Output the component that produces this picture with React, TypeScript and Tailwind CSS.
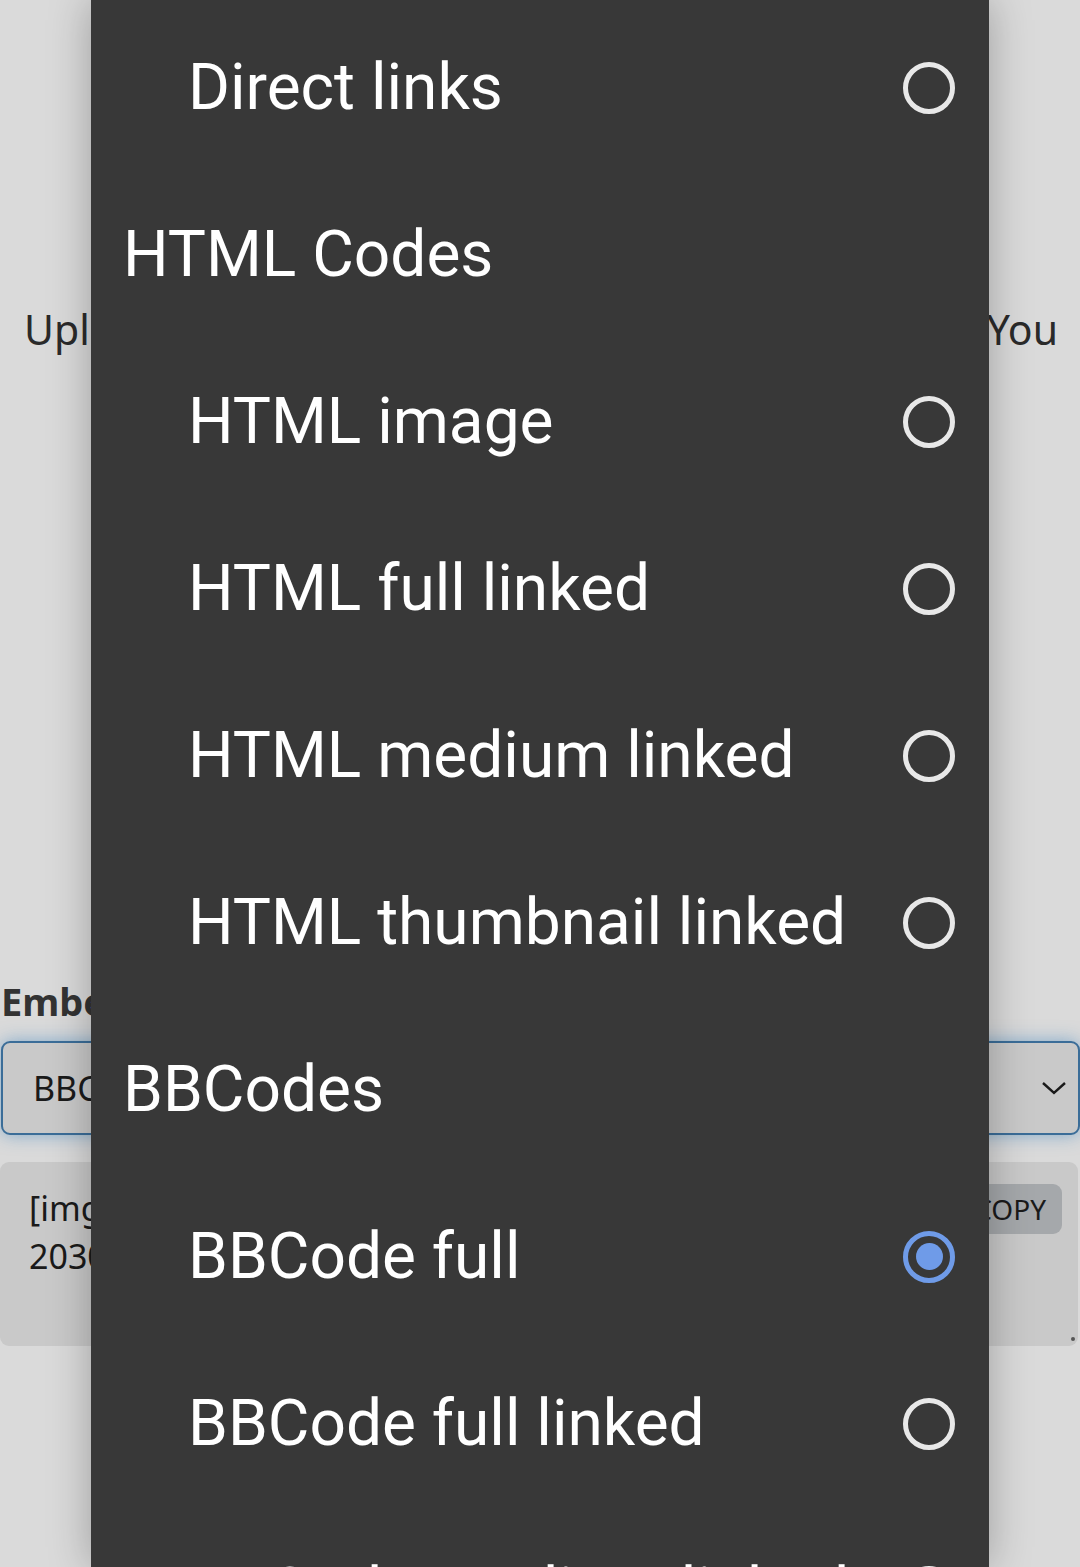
import React from 'react';

type Option = { label: string; header?: boolean; selected?: boolean };

const options: Option[] = [
  { label: 'Direct links' },
  { label: 'HTML Codes', header: true },
  { label: 'HTML image' },
  { label: 'HTML full linked' },
  { label: 'HTML medium linked' },
  { label: 'HTML thumbnail linked' },
  { label: 'BBCodes', header: true },
  { label: 'BBCode full', selected: true },
  { label: 'BBCode full linked' },
  { label: 'BBCode medium linked' },
];

function Radio({ checked }: { checked?: boolean }) {
  if (checked) {
    return (
      <span className="flex h-[52px] w-[52px] items-center justify-center rounded-full border-[5px] border-[#6f9be8]">
        <span className="h-[27px] w-[27px] rounded-full bg-[#6f9be8]" />
      </span>
    );
  }
  return <span className="block h-[52px] w-[52px] rounded-full border-[5px] border-[#e8e8e8]" />;
}

export default function App() {
  return (
    <div className="relative h-[1567px] w-full overflow-hidden bg-[#dadada] font-['Noto_Sans','Open_Sans',sans-serif] text-[#2a2a2a]">
      {/* page behind the picker */}
      <div className="flex flex-col">
        <div className="flex h-[660px] items-start justify-between pl-[24px] pr-[22px] pt-[301px] text-[41px] leading-[56px]">
          <span>Upload your images</span>
          <span>You</span>
        </div>

        <div className="pt-[313px]">
          <h3 className="pl-[1px] text-[38px] font-bold leading-[56px] text-[#333]">Embed codes</h3>
          <div className="mt-[12px] ml-[1px] flex h-[94px] items-center justify-between rounded-[9px] border-2 border-[#3b6d98] bg-[#c9c9c9] pl-[30px] pr-[8px] shadow-[0_0_18px_rgba(59,130,190,0.55)]">
            <span className="text-[34px] text-[#1a1a1a]">BBCode full</span>
            <svg width="28" height="16" viewBox="0 0 28 16" className="mr-[2px]">
              <path d="M3 3 L14 13 L25 3" fill="none" stroke="#1a1a1a" strokeWidth="2.4" />
            </svg>
          </div>

          <div className="relative mt-[27px] mr-[2px] flex h-[184px] justify-between rounded-[9px] bg-[#c9c9c9] pl-[29px] pr-[16px] pt-[22px]">
            <p className="text-[34px] leading-[48px] text-[#1a1a1a]">
              [img]https://example.com/images/
              <br />
              2030/01/01/image.png[/img]
            </p>
            <button className="h-[50px] shrink-0 rounded-[9px] bg-[#a5a8ab] px-[16px] text-[28px] leading-[50px] text-[#1a1a1a]">
              COPY
            </button>
            <span className="absolute bottom-[5px] right-[3px] h-[4px] w-[4px] rounded-full bg-[#555]" />
          </div>
        </div>
      </div>

      {/* picker overlay */}
      <div className="absolute left-[91px] top-0 h-full w-[898px] bg-[#383838] shadow-[0_0_40px_rgba(0,0,0,0.28)] font-['Roboto',sans-serif]">
        <ul className="pt-[4px]">
          {options.map((o, i) => (
            <li
              key={o.label}
              className={`flex h-[167px] items-center justify-between pr-[34px] text-white ${o.header ? 'pl-[32px]' : 'pl-[97px]'} ${i === options.length - 1 ? 'mt-[1px]' : ''}`}
            >
              <span className="text-[64px] leading-none">{o.label}</span>
              {!o.header && <Radio checked={o.selected} />}
            </li>
          ))}
        </ul>
      </div>
    </div>
  );
}
